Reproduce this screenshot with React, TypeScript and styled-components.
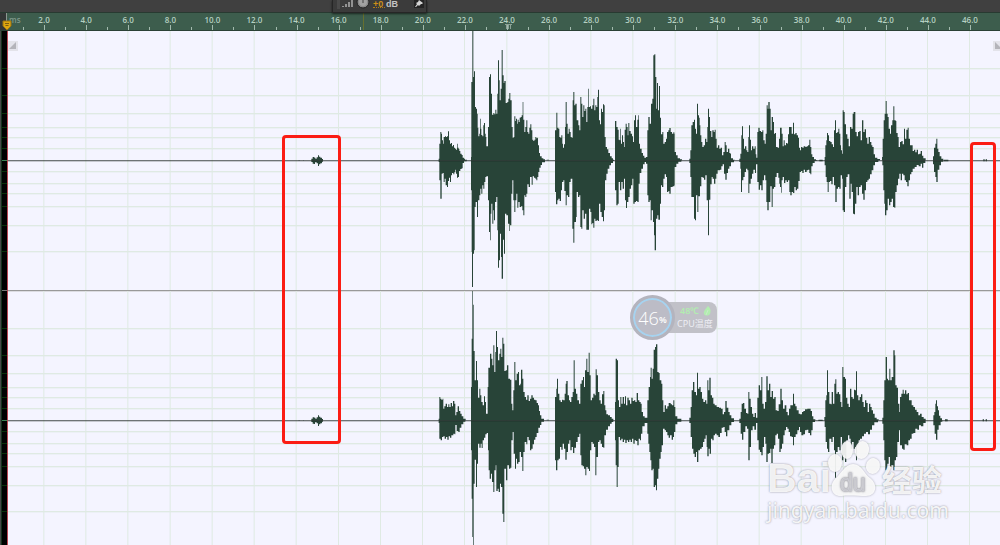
import React from "react";
import styled, { createGlobalStyle } from "styled-components";

const GlobalStyle = createGlobalStyle`
  * { box-sizing: border-box; }
  html, body { margin: 0; padding: 0; background: #404040; }
  body { font-family: "Noto Sans", "Noto Sans CJK SC", sans-serif; overflow: hidden; }
`;

/* ---------- waveform data: "x,height" steps, three units to a pixel ---------- */

type Clip = { from: number; up: string; down: string };

const LEFT_CHANNEL: Clip[] = [
  {
    from: 810,
    up: "85,1 90,0 99,1 102,0 124,5 128,10 133,8 136,5 140,9 144,15 147,11 151,8 156,4 159,0",
    down: "124,5 128,10 132,11 135,6 140,9 144,17 147,12 151,9 156,4 159,0",
  },
  {
    from: 1290,
    up: "26,5 28,50 31,85 34,80 36,60 39,50 41,70 45,72 48,70 51,72 54,87 57,60 60,50 63,52 66,42 69,46 72,38 75,35 78,32 81,50 83,38 86,34 88,28 91,20 95,16 98,8 102,5 105,2 111,0 123,10 124,235 127,388 130,250 132,267 135,160 138,155 141,140 143,98 145,72 148,80 150,125 152,95 154,76 157,72 160,105 162,112 165,80 167,70 169,42 174,100 177,250 180,258 183,200 186,137 190,142 193,138 196,152 199,140 202,200 204,300 207,240 209,180 212,215 215,331 218,255 221,232 223,238 227,172 232,175 235,185 238,202 241,180 245,100 248,68 251,70 253,132 256,118 258,125 261,110 263,122 266,115 269,128 272,130 275,135 278,175 280,122 283,85 286,100 289,120 292,85 295,80 298,98 301,108 304,90 307,62 310,58 313,62 316,70 319,66 322,68 324,45 327,22 330,12 335,6 340,3 345,0 350,2 357,0 375,90 379,143 382,98 385,95 388,70 391,68 394,75 397,50 399,38 402,48 405,100 407,175 410,110 413,80 416,95 419,85 422,70 425,68 428,180 430,205 433,165 436,170 440,120 445,105 448,90 451,190 454,170 457,130 460,165 463,148 466,155 469,115 472,160 475,215 477,160 480,162 483,155 487,165 490,185 493,150 496,165 499,160 502,190 504,212 507,120 510,108 513,155 516,145 519,168 522,165 524,70 527,40 531,33 535,22 540,12 545,6 549,2 552,0",
    down: "26,5 28,60 31,115 35,40 38,38 41,65 44,55 47,75 51,80 54,62 57,52 60,65 63,45 66,38 70,42 73,36 76,28 78,40 81,52 84,50 87,32 91,26 95,24 98,8 102,3 110,0 123,90 125,275 126,380 129,280 132,270 134,140 137,125 141,170 144,120 148,105 151,85 154,100 157,75 160,85 163,65 166,50 169,48 174,120 177,215 180,240 182,160 184,130 187,190 190,150 192,180 195,125 199,110 202,210 204,322 207,300 210,220 213,290 215,355 219,238 222,280 225,160 229,165 234,190 238,212 240,195 244,100 247,60 250,120 253,155 256,120 259,100 262,142 265,125 269,140 273,138 277,150 280,165 283,105 286,110 289,100 292,72 296,80 300,50 305,73 308,48 312,52 316,55 319,60 322,50 325,35 328,22 332,14 336,6 345,0 375,95 378,132 382,120 385,115 389,122 393,90 396,65 400,60 403,92 407,135 410,105 414,110 418,65 422,55 427,205 430,247 433,185 438,170 440,95 444,110 448,105 451,200 454,205 457,150 461,175 465,160 469,208 473,208 477,145 481,155 484,192 487,188 490,202 493,175 496,182 500,180 504,182 507,130 511,155 515,170 519,183 522,150 525,60 529,40 533,25 538,15 543,8 549,2 552,0",
  },
  {
    from: 1800,
    up: "45,118 49,100 53,92 56,62 59,60 61,95 63,50 66,75 69,55 72,40 74,92 77,110 80,100 83,75 85,112 88,88 92,80 96,72 99,55 102,120 105,135 108,100 112,122 115,135 117,50 120,35 125,22 129,14 133,8 138,10 142,90 145,130 149,110 153,170 157,185 160,315 163,318 166,250 169,155 171,232 174,150 177,223 180,128 183,78 187,85 190,50 194,55 198,65 201,85 205,90 208,97 212,85 216,80 220,84 223,80 224,25 228,15 233,6 240,3 246,0 268,5 271,30 274,105 278,115 282,122 285,95 288,80 291,170 294,135 297,128 299,105 301,75 304,55 307,40 311,45 315,65 319,55 322,100 324,155 327,130 330,88 334,70 337,90 341,85 344,92 347,65 350,38 354,45 358,35 362,38 366,15 370,25 374,55 377,45 380,25 384,35 388,22 391,20 393,6 399,2 404,0 418,5 421,20 424,75 426,102 429,65 432,35 435,42 439,30 442,25 445,70 447,105 450,62 453,30 456,42 460,35 464,42 467,18 469,8 472,85 475,98 479,88 483,85 487,90 490,60 494,50 497,80 500,165 503,155 505,175 509,155 512,90 515,130 519,115 522,80 525,82 528,40 533,38 537,65",
    down: "45,90 49,135 53,130 56,65 60,90 64,65 68,85 72,55 75,120 78,143 81,125 85,110 89,85 93,75 97,55 100,130 104,125 108,122 112,125 116,70 119,38 124,25 129,12 134,5 138,10 142,105 145,125 149,120 152,180 155,150 159,185 162,225 164,270 168,175 172,165 175,178 180,130 183,75 186,80 190,55 194,42 198,50 201,95 205,92 208,100 212,80 218,78 223,75 224,20 229,10 235,4 244,0 268,8 271,50 274,110 278,110 282,175 285,180 288,105 292,155 295,108 300,78 304,50 308,52 312,58 316,45 320,120 324,225 327,118 331,72 335,50 338,55 342,70 346,55 349,40 353,30 360,28 364,18 368,12 372,40 376,58 380,38 384,25 388,18 393,6 402,0 418,5 421,25 423,95 426,60 430,50 434,35 438,25 442,30 445,98 448,70 452,55 456,40 460,28 465,38 468,12 472,65 476,88 480,75 484,90 488,60 492,45 496,60 499,125 502,150 506,125 511,78 515,140 518,85 522,80 526,50 530,38 535,52 538,70",
  },
  {
    from: 2340,
    up: "0,98 5,80 8,42 11,60 14,45 18,52 22,50 24,78 27,100 31,100 35,80 39,113 42,78 46,82 50,75 54,68 57,38 60,30 63,40 67,38 71,42 76,40 80,42 84,45 88,62 91,40 94,18 97,10 102,3 108,0 118,2 128,0 134,10 136,45 139,60 141,82 144,75 147,58 151,55 155,48 159,40 162,90 165,120 168,82 172,85 175,95 178,80 181,45 183,30 186,20 188,150 191,145 194,108 198,78 202,65 206,42 210,100 214,95 218,140 221,145 226,85 230,72 234,85 238,88 242,60 246,120 250,85 254,93 258,68 262,50 266,70 270,55 274,45 277,40 281,18 285,8 292,4 300,0 306,10 308,65 311,120 314,140 317,178 320,140 323,130 326,95 330,80 333,105 337,120 340,162 343,120 347,118 349,82 353,70 356,40 360,55 364,58 368,48 372,95 375,65 379,92 383,98 386,65 390,45 395,45 398,28 402,32 406,24 410,32 414,18 418,20 422,28 426,14 430,6 437,0 459,12 462,38 466,50 469,65 472,35 475,25 479,12 484,5 490,0 492,2 505,0 610,3 614,0 617,3 621,0",
    down: "0,80 3,97 5,60 8,50 12,68 16,60 20,65 24,60 28,95 31,105 35,95 39,98 43,80 47,90 51,85 55,62 59,35 63,32 67,38 71,28 75,35 80,30 84,28 88,38 91,42 94,18 98,8 104,2 110,0 118,3 128,0 134,15 137,50 140,65 143,95 146,65 150,62 154,72 158,50 162,75 166,125 170,85 174,80 178,85 182,45 186,55 188,150 191,155 195,80 199,50 203,42 208,115 212,70 215,95 219,160 222,162 225,130 229,80 233,105 237,80 242,75 246,100 250,118 254,90 258,65 262,60 266,55 270,42 275,30 280,15 285,5 295,0 307,15 310,90 313,130 315,165 319,150 323,115 327,135 331,125 335,115 339,140 343,142 346,95 350,75 354,55 358,40 362,60 366,40 370,45 374,60 378,65 382,78 386,60 390,42 394,35 398,25 404,20 410,14 416,18 422,10 426,22 430,8 436,0 459,12 462,35 466,50 469,65 473,28 478,15 483,4 490,0 492,3 505,0 610,3 614,0 617,3 621,0",
  },
];

const RIGHT_CHANNEL: Clip[] = [
  {
    from: 810,
    up: "85,1 90,0 99,1 102,0 124,5 128,9 133,8 136,5 140,9 144,15 147,11 151,8 156,4 159,0",
    down: "124,5 128,10 132,11 135,6 140,9 144,17 147,12 151,9 156,4 159,0",
  },
  {
    from: 1290,
    up: "26,5 28,70 31,65 34,62 38,65 40,35 43,42 47,50 51,40 55,48 58,40 62,52 66,42 69,58 73,50 76,15 79,25 83,42 87,28 91,20 95,12 100,5 107,0 123,100 125,245 127,388 129,347 131,208 134,120 138,178 141,120 144,68 148,95 151,75 154,55 158,45 162,72 165,55 168,20 173,100 175,158 180,200 184,185 187,165 190,225 193,145 196,205 198,268 201,220 204,180 208,200 211,215 214,190 217,248 220,230 223,148 227,150 231,165 235,125 240,122 244,50 247,30 250,90 253,175 256,120 260,140 264,145 267,105 271,110 273,152 277,125 280,85 284,70 288,62 292,75 296,58 300,65 304,75 308,68 312,62 316,60 320,52 324,45 327,28 330,15 334,5 342,0 350,2 357,0 375,70 379,95 381,125 384,80 388,60 392,55 396,62 400,60 404,80 407,110 409,118 413,75 417,60 420,55 424,70 428,85 431,180 434,95 438,80 442,60 447,50 451,110 455,120 459,130 462,100 465,150 469,185 472,145 476,203 479,135 482,60 486,68 490,80 494,75 497,153 500,135 504,85 508,60 512,50 516,78 520,88 523,45 526,30 529,18 534,15 540,10 545,5 550,0",
    down: "26,8 28,55 32,60 36,50 40,48 44,55 48,50 52,58 56,48 60,52 64,45 70,40 74,42 76,14 80,32 85,35 89,22 94,12 100,4 106,0 123,90 125,235 127,350 129,388 131,190 134,118 138,200 141,130 144,70 148,82 152,70 155,83 158,60 162,52 166,42 170,38 174,90 176,150 179,175 183,160 186,185 190,215 193,150 197,135 199,212 203,205 206,215 210,190 213,200 217,280 220,305 223,145 228,180 232,135 237,145 241,142 244,60 248,35 251,100 255,145 258,115 261,130 265,125 269,95 273,110 277,152 280,95 284,65 289,72 292,50 296,60 300,90 304,85 308,72 312,58 316,50 320,38 325,22 330,14 334,4 342,0 375,120 378,150 382,120 386,115 390,80 394,88 398,70 402,85 406,118 410,95 414,70 418,60 421,90 425,80 429,98 433,82 438,65 443,50 448,40 451,105 454,135 458,138 462,145 466,165 469,140 473,145 477,152 480,90 484,65 488,70 492,80 496,165 499,110 504,65 508,60 512,70 516,80 520,82 523,45 528,28 534,18 540,10 545,5 550,0",
  },
  {
    from: 1800,
    up: "45,55 47,185 51,180 54,60 57,40 61,70 64,50 68,70 72,50 75,72 78,45 82,68 86,60 90,50 94,68 98,58 102,60 106,55 110,82 114,60 118,55 122,50 125,25 129,12 134,8 142,60 146,100 150,130 152,158 155,125 158,155 161,212 165,220 168,228 172,145 176,142 179,120 184,110 187,60 190,25 194,45 198,35 202,42 206,52 212,48 216,45 220,60 223,40 226,12 232,5 244,0 268,8 272,40 275,90 279,115 283,85 288,75 291,143 294,95 298,100 302,85 306,65 310,55 315,60 319,50 322,120 325,90 328,128 332,75 336,68 340,50 344,45 350,40 357,38 363,35 368,18 372,25 376,58 380,38 385,25 389,15 394,6 402,0 418,5 422,25 425,50 429,52 433,35 438,22 442,20 445,85 448,65 452,40 456,20 460,10 464,22 468,8 472,68 476,105 480,90 484,130 487,50 491,35 495,55 499,132 503,90 507,110 511,70 515,88 519,65 523,70 527,30 532,28 536,48 541,95 545,60 549,35 554,45 559,25 563,15 567,35 571,45 575,45 579,80 582,50 586,42 590,30 596,20",
    down: "45,60 47,135 50,200 53,140 56,50 60,60 64,55 68,65 72,58 76,68 80,60 84,65 88,58 92,65 96,55 100,70 104,60 108,62 112,75 116,55 120,60 123,40 127,18 134,8 142,40 145,70 148,95 151,120 154,150 158,145 161,200 165,195 168,210 171,175 175,145 178,115 182,95 185,75 189,25 194,30 198,35 202,45 206,52 210,45 215,58 219,50 222,35 226,12 232,4 244,0 268,8 272,50 276,85 280,100 284,110 288,95 291,125 295,90 300,85 305,80 309,65 313,55 317,45 320,80 322,108 326,85 329,100 333,55 337,60 341,45 345,40 350,45 355,50 360,38 365,22 370,20 374,35 378,48 382,30 388,15 394,5 402,0 418,8 422,40 426,58 430,35 436,18 441,25 445,120 449,80 453,30 458,18 463,28 468,8 472,60 476,88 480,95 484,105 488,80 492,50 496,70 499,125 503,100 507,98 511,85 514,128 518,85 522,75 526,45 530,40 534,55 538,95 542,85 546,70 550,45 554,30 558,20 562,25 566,35 570,48 575,50 579,75 582,50 587,42 592,30 597,20",
  },
  {
    from: 2250,
    up: "150,18 156,25 160,28 165,33 172,35 178,35 182,28 186,12 190,3 196,0 205,2 218,0 223,10 226,60 229,75 231,150 234,85 238,50 242,48 245,85 249,50 253,110 256,123 259,80 263,85 267,78 271,55 274,40 277,160 280,130 285,125 288,68 292,50 296,40 300,95 304,70 308,65 312,92 315,90 318,147 321,75 325,60 329,70 333,78 337,55 341,40 345,60 349,52 353,25 357,50 361,40 365,30 369,20 374,8 380,3 386,0 397,8 400,60 403,120 407,190 411,125 414,120 418,155 421,120 425,130 430,210 434,195 436,105 440,98 444,50 448,25 450,70 454,80 458,92 461,80 465,90 469,78 473,82 477,60 481,60 485,45 490,40 495,32 500,25 505,15 510,20 515,10 521,5 527,0 550,15 553,25 556,50 558,60 561,42 564,30 567,14 571,6 576,0 585,3 593,0 698,3 702,0 707,3 711,0",
    down: "150,35 154,45 160,42 165,30 170,28 175,38 180,45 184,30 188,5 195,0 205,2 218,0 224,20 227,65 231,85 234,95 238,55 244,65 248,50 252,90 255,172 258,95 263,80 268,90 272,50 276,120 280,105 285,125 289,60 294,45 298,55 302,85 306,65 311,85 315,80 318,120 321,75 326,60 330,55 336,48 342,40 348,35 354,42 360,28 366,15 373,6 384,0 397,10 400,60 403,120 406,150 412,130 416,110 420,140 424,135 430,150 434,120 438,110 442,65 447,30 450,75 456,85 460,88 464,72 470,75 475,60 480,55 485,40 490,38 496,25 502,28 507,15 513,18 520,8 527,0 550,15 554,40 558,58 562,28 566,15 572,4 577,0 585,3 593,0 698,3 702,0 707,3 711,0",
  },
];

function outline(clips: Clip[], side: "up" | "down"): string {
  const sign = side === "up" ? -1 : 1;
  let d = "M24 0";
  clips.forEach((clip) => {
    clip[side].split(" ").forEach((step) => {
      const [x, h] = step.split(",").map(Number);
      d += `H${clip.from + x}V${sign * h}`;
    });
  });
  return d + "V0Z";
}

const DB_LINES = [-92, -65, -47, -33, -23, -12, 11, 23, 33, 46, 65, 91];
const TIMES = Array.from({ length: 23 }, (_, i) => ((i + 1) * 2).toFixed(1));

/* ---------- styled parts ---------- */

const Editor = styled.main`
  position: relative;
  display: flex;
  flex-direction: column;
  width: 100%;
  height: 100vh;
  overflow: hidden;
  background: #f4f4ff;
`;

const TopBar = styled.header`
  display: flex;
  flex: none;
  height: 12px;
  padding-left: 332px;
  background: #404040;
`;

const Hud = styled.div`
  position: relative;
  z-index: 2;
  display: flex;
  align-items: flex-start;
  width: 95px;
  height: 13px;
  padding: 0 2px 0 4px;
  border: solid #262626;
  border-width: 0 1px 1px;
  background: #3b3b3b;
  box-shadow: 0 1px 2px rgba(0, 0, 0, 0.6);
`;

const HudIcons = styled.svg`
  flex: none;
  width: 36px;
  height: 9px;
`;

const Gain = styled.label`
  display: flex;
  gap: 1px;
  height: 12px;
  margin-right: auto;
  color: #c4c4c4;
  font-family: "Liberation Sans", sans-serif;
  font-size: 9px;
  font-weight: 700;
  line-height: 8px;
`;

const GainInput = styled.input`
  width: 12px;
  height: 8px;
  padding: 0;
  border: 0;
  border-bottom: 1px dotted #b37d14;
  background: transparent;
  color: #cc8e18;
  font: inherit;
`;

const PinButton = styled.button`
  width: 10px;
  height: 8px;
  padding: 0;
  border: 0;
  background: #242424;
  line-height: 0;
`;

const Ruler = styled.div`
  position: relative;
  display: grid;
  grid-template-columns: repeat(23, 1fr);
  flex: none;
  height: 19px;
  padding: 0 9px 0 23px;
  border-top: 1px solid #283a31;
  border-bottom: 1px solid #2b4136;
  background: #3d5d4d;
  color: #b5d0c1;
  font-family: "Open Sans", sans-serif;
  font-size: 8px;
  font-weight: 600;
  line-height: 14px;
`;

const Time = styled.span`
  position: relative;
  text-align: center;

  &::before,
  &::after {
    content: "";
    position: absolute;
    bottom: 0;
    width: 1px;
    background: #a3baae;
  }
  &::before { left: 0; height: 3px; }
  &::after { left: 50%; height: 5px; }
`;

const Unit = styled.span`
  position: absolute;
  left: 9px;
  color: #7f988b;
`;

const RangeEdge = styled.span`
  position: absolute;
  left: 0;
  top: 0;
  width: 7px;
  height: 17px;
  background: #333636;
  border-right: 1px solid #8e9792;
`;

const LoopMark = styled.span`
  position: absolute;
  left: 36.3%;
  top: 0;
  width: 1px;
  height: 17px;
  background: #66702f;
`;

const ZoomMark = styled.svg`
  position: absolute;
  left: 50.5%;
  top: 11px;
  width: 7px;
  height: 5px;
`;

const Playhead = styled.svg`
  position: absolute;
  z-index: 3;
  left: 2px;
  top: 7px;
  width: 10px;
  height: 11px;
`;

const Tracks = styled.section`
  position: relative;
  display: flex;
  flex: 1;
  min-height: 0;
  overflow: hidden;
`;

const Gutter = styled.svg`
  flex: none;
  width: 8px;
  height: 100%;
`;

const Lanes = styled.div`
  flex: 1;
  min-width: 0;
`;

const Divider = styled.hr`
  height: 1px;
  margin: 0;
  border: 0;
  background: #999;
  box-shadow: 0 1px 0 #dcdce2;
`;

const Channel = styled.svg`
  display: block;
  width: 100%;
  height: 259px;
`;

const CornerHandle = styled.button<{ $end?: boolean }>`
  position: absolute;
  top: 10px;
  ${(p) => (p.$end ? "right: -3px;" : "left: 8px;")}
  width: 10px;
  height: 10px;
  padding: 1px;
  border: 0;
  background: #e3e3ea;
  line-height: 0;
  transform: ${(p) => (p.$end ? "scaleX(-1)" : "none")};
`;

const Highlight = styled.div<{ $left: string; $top: number; $width: number; $height: number }>`
  position: absolute;
  left: ${(p) => p.$left};
  top: ${(p) => p.$top}px;
  width: ${(p) => p.$width}px;
  height: ${(p) => p.$height}px;
  border: 3px solid #fb1c14;
  border-radius: 4px;
`;

const Monitor = styled.aside`
  position: absolute;
  left: 63%;
  top: 264px;
  display: flex;
  align-items: center;
  width: 87px;
  height: 45px;
`;

const Load = styled.div`
  position: relative;
  z-index: 1;
  display: flex;
  flex: none;
  align-items: center;
  justify-content: center;
  width: 45px;
  height: 45px;
  border: 3px solid #b4b4be;
  border-radius: 50%;
  background: #bcbcc6;
  box-shadow: inset 0 0 0 2px #a6d3f0;
  color: #fff;
  font-family: "Open Sans", sans-serif;
  font-size: 18px;
  font-weight: 300;
  line-height: 20px;

  small { padding-top: 4px; font-size: 9px; font-weight: 600; }
`;

const Readout = styled.div`
  flex: 1;
  height: 31px;
  margin-left: -10px;
  padding: 2px 0 0 12px;
  border-radius: 0 8px 8px 0;
  background: #c1c1c8;
  color: #ededf4;
  font-size: 9px;
  line-height: 13px;
  white-space: nowrap;
`;

const Temperature = styled.div`
  display: flex;
  align-items: center;
  gap: 4px;
  padding-left: 3px;
  color: #b2edb0;
  font-weight: 600;
`;

const Leaf = styled.svg`
  width: 8px;
  height: 10px;
`;

const Watermark = styled.div`
  position: absolute;
  left: 76.7%;
  top: 408px;
  width: 184px;
  color: rgba(255, 255, 255, 0.9);
  text-shadow: 0 0 2px rgba(100, 100, 110, 0.75);
  white-space: nowrap;
`;

const Brand = styled.div`
  display: flex;
  align-items: flex-end;
  height: 58px;
  font-family: "Liberation Sans", "Noto Sans CJK SC", sans-serif;
  font-weight: 700;
  font-size: 41px;
  line-height: 38px;
`;

const Paw = styled.svg`
  flex: none;
  width: 54px;
  height: 58px;
  margin-left: -3px;
  overflow: visible;
  filter: drop-shadow(0 0 1px rgba(110, 110, 120, 0.6));
`;

const BrandCjk = styled.span`
  font-family: "Noto Sans CJK SC", sans-serif;
  font-size: 30px;
`;

const Site = styled.div`
  font-family: "Noto Sans", sans-serif;
  font-size: 21px;
  line-height: 26px;
`;

/* ---------- components ---------- */

function ChannelLane({ clips, label }: { clips: Clip[]; label: string }) {
  return (
    <Channel viewBox="24 -388 2976 777" preserveAspectRatio="none" role="img" aria-label={label}>
      <g fill="#dfeae3">
        {TIMES.map((t, i) => (
          <rect key={t} x={130 + Math.round(i * 126.24)} y={-388} width={3} height={777} />
        ))}
        {DB_LINES.map((y) => (
          <rect key={y} x={24} y={y * 3 - 1} width={2976} height={4} />
        ))}
      </g>
      <path d={outline(clips, "up")} fill="#284438" />
      <path d={outline(clips, "down")} fill="#284438" />
      <rect x={24} y={-1} width={2976} height={4} fill="#1c2420" fillOpacity={0.62} />
    </Channel>
  );
}

function Corner({ end }: { end?: boolean }) {
  return (
    <CornerHandle $end={end} aria-label={end ? "Fade out" : "Fade in"}>
      <svg width="8" height="8" viewBox="0 0 8 8">
        <path d="M0 7L7 0V7Z" fill="#b4b4ba" />
      </svg>
    </CornerHandle>
  );
}

export default function App() {
  return (
    <>
      <GlobalStyle />
      <Editor>
        <TopBar>
          <Hud>
            <HudIcons viewBox="0 0 36 9">
              <path d="M0 0H3M0 2H3M0 4H3M0 6H3M0 8H3" stroke="#5b5b5b" />
              <path d="M5 7V6H7V7ZM8 7V4H10V7ZM11 7V2H13V7ZM14 7V0H16V7Z" fill="#929292" />
              <circle cx="26" cy="2" r="6" fill="#8a8a8a" stroke="#222" />
              <circle cx="26" cy="2" r="4" fill="#a2a2a2" />
              <path d="M26 0V3" stroke="#444" />
            </HudIcons>
            <Gain>
              <GainInput defaultValue="+0" aria-label="Gain" />
              dB
            </Gain>
            <PinButton aria-label="Pin">
              <svg width="10" height="8" viewBox="0 0 10 8">
                <path d="M5 0L9 3L8 4L7 4L5 6L4 5L2 7L1 7L3 4L2 3L4 2Z" fill="#d5d5d5" />
              </svg>
            </PinButton>
          </Hud>
        </TopBar>

        <Ruler>
          <Unit>ms</Unit>
          <RangeEdge />
          <LoopMark />
          {TIMES.map((t) => (
            <Time key={t}>{t}</Time>
          ))}
          <ZoomMark viewBox="0 0 7 5">
            <path d="M0 0.5H7M1.5 0V5M3.5 0V5M5.5 0V5" stroke="#8ba296" strokeWidth="1" fill="none" />
          </ZoomMark>
          <Playhead viewBox="0 0 10 11">
            <path d="M1 1H9V6L5 10L1 6Z" fill="#dda60f" stroke="#9c7410" strokeWidth="1" />
            <path d="M3 3.5H7M3.5 5.5H6.5" stroke="#7d5d10" strokeWidth="1" />
          </Playhead>
        </Ruler>

        <Tracks>
          <Gutter viewBox="0 0 8 514" preserveAspectRatio="xMinYMin slice">
            <rect width="8" height="520" fill="#000" />
            <rect width="1" height="520" fill="#474747" />
            <rect x="1" width="1" height="520" fill="#14301b" />
            {[129, 389].map((c) => (
              <g key={c}>
                {DB_LINES.map((y) => (
                  <rect key={y} x="2" y={c + y} width="5" height="1" fill="#083008" />
                ))}
                <rect x="2" y={c} width="5" height="1" fill="#3c8455" />
              </g>
            ))}
            <rect x="2" y="259" width="5" height="1" fill="#777" />
            <rect x="7" width="1" height="520" fill="#b84652" />
          </Gutter>
          <Lanes>
            <ChannelLane clips={LEFT_CHANNEL} label="Left channel" />
            <Divider />
            <ChannelLane clips={RIGHT_CHANNEL} label="Right channel" />
          </Lanes>
          <Corner />
          <Corner end />

          <Highlight $left="28.2%" $top={104} $width={59} $height={309} />
          <Highlight $left="97%" $top={111} $width={26} $height={309} />

          <Monitor>
            <Load>
              46<small>%</small>
            </Load>
            <Readout>
              <Temperature>
                48℃
                <Leaf viewBox="0 0 8 10">
                  <path d="M5 0C8 3 8 5 7 8C5 10 2 10 1 8C0 5 3 3 5 0Z" fill="#b2edb0" />
                  <path d="M5 4L3 9" stroke="#d8e8d8" strokeWidth="0.6" />
                </Leaf>
              </Temperature>
              CPU温度
            </Readout>
          </Monitor>

          <Watermark>
            <Brand>
              Bai
              <Paw viewBox="0 0 54 58">
                <g fill="#fff" fillOpacity="0.88">
                  <ellipse cx="7" cy="24" rx="7" ry="9" />
                  <ellipse cx="19" cy="11" rx="6" ry="9" />
                  <ellipse cx="34" cy="11" rx="7" ry="9" transform="rotate(12 34 11)" />
                  <ellipse cx="45" cy="27" rx="7" ry="8" transform="rotate(12 45 27)" />
                  <path d="M25 25C34 25 36 35 42 39C50 45 49 57 38 57C31 57 20 56 14 57C3 58 1 46 7 40C13 35 17 25 25 25Z" />
                </g>
                <text x="12" y="52" fontSize="23" fontWeight="400" fill="#fff" stroke="#cdcdd4" strokeWidth="1">du</text>
              </Paw>
              <BrandCjk>经验</BrandCjk>
            </Brand>
            <Site>jingyan.baidu.com</Site>
          </Watermark>
        </Tracks>
      </Editor>
    </>
  );
}
